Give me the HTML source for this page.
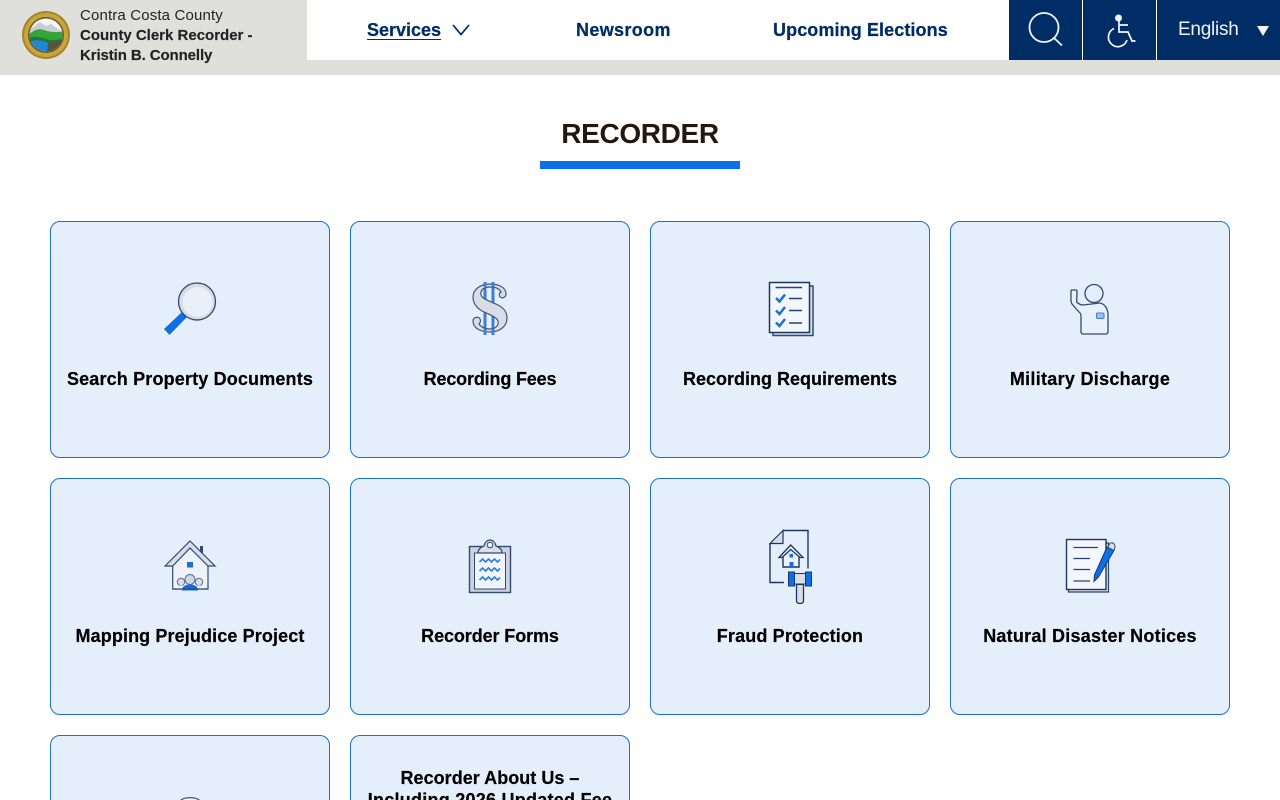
<!DOCTYPE html>
<html lang="en">
<head>
<meta charset="utf-8">
<title>Recorder</title>
<style>
html,body{margin:0;padding:0;width:1280px;height:800px;overflow:hidden;background:#fff;font-family:"Liberation Sans",sans-serif;}
#page{position:relative;width:1280px;height:800px;overflow:hidden;background:#fff;}
.a{position:absolute;white-space:nowrap;}
.card{position:absolute;width:278px;height:235px;background:#e5effb;border:1px solid #1a6fd0;border-radius:10px;}
.lbl{position:absolute;left:50px;width:280px;text-align:center;font-weight:700;font-size:18px;line-height:22px;color:#000;white-space:nowrap;-webkit-text-stroke:.2px #000;}
.nav{position:absolute;top:19px;font-weight:700;font-size:18px;line-height:22px;color:#002d66;white-space:nowrap;-webkit-text-stroke:.25px #002d66;}
svg{position:absolute;display:block;overflow:visible;}
</style>
</head>
<body>
<div id="page">
<div class="a" style="left:0;top:0;width:1280px;height:75px;background:#dfe0dc;"></div>
<div class="a" style="left:307px;top:0;width:702px;height:60px;background:#fff;"></div>
<div class="a" style="left:1009px;top:0;width:271px;height:60px;background:#002d66;"></div>
<div class="a" style="left:1082px;top:0;width:1px;height:60px;background:#fff;"></div>
<div class="a" style="left:1156px;top:0;width:1px;height:60px;background:#fff;"></div>

<svg style="left:22px;top:11px" width="48" height="48" viewBox="0 0 48 48">
<defs><clipPath id="seal"><circle cx="24" cy="24" r="16.500"/></clipPath></defs>
<circle cx="24" cy="24" r="24" fill="#a98426"/><circle cx="24" cy="24" r="22" fill="#c7a43f"/><circle cx="24" cy="24" r="18" fill="#6f5a20"/>
<g clip-path="url(#seal)">
<rect width="48" height="48" fill="#f3f5f5"/>
<path d="M6 20L18 11l6 4 5-2 14 10v4H6z" fill="#c9ced2"/>
<path d="M6 24c6-5 11-7 16-5s12 3 20 1v14H6z" fill="#36a336"/>
<path d="M6 27c6-2 12-1 18 1s12 1 18-1v5H6z" fill="#207a33"/>
<path d="M6 31c8-3 14-2 20 1 2 3 1 7-1 10H6z" fill="#1f86d8"/>
<path d="M26 32l14-3v8l-8 5-7-1z" fill="#55543f"/>
</g>
</svg>
<div class="a" style="left:80px;top:6px;font-size:15px;line-height:19px;color:#222;letter-spacing:.15px;">Contra Costa County</div>
<div class="a" style="left:80px;top:26px;font-size:15px;line-height:19px;font-weight:700;color:#222;letter-spacing:0;-webkit-text-stroke:.15px #222;">County Clerk Recorder -</div>
<div class="a" style="left:80px;top:46px;font-size:15px;line-height:19px;font-weight:700;color:#222;letter-spacing:-.1px;-webkit-text-stroke:.15px #222;">Kristin B. Connelly</div>

<div class="nav" style="left:367px;text-decoration:underline;text-underline-offset:3px;letter-spacing:0;">Services</div>
<svg style="left:452px;top:24px" width="18" height="12" viewBox="0 0 18 12"><path d="M1 1l8 9.500L17 1" fill="none" stroke="#002d66" stroke-width="1.700"/></svg>
<div class="nav" style="left:576px;letter-spacing:.35px;">Newsroom</div>
<div class="nav" style="left:773px;letter-spacing:.1px;">Upcoming Elections</div>

<svg style="left:1028px;top:12px" width="36" height="36" viewBox="0 0 36 36"><circle cx="16" cy="15.500" r="14.500" fill="none" stroke="#f4f6f8" stroke-width="1.800"/><path d="M25.500 25.500l8.500 8" stroke="#f4f6f8" stroke-width="1.800" fill="none"/></svg>
<svg style="left:1106px;top:14px" width="30" height="33" viewBox="0 0 30 33">
<circle cx="12.500" cy="4" r="3.500" fill="#f4f6f8"/>
<path d="M13 7v11h9l4 9h3.500M13 11h9" fill="none" stroke="#f4f6f8" stroke-width="1.700"/>
<path d="M8 14.500A9.500 9.500 0 1 0 21 26" fill="none" stroke="#f4f6f8" stroke-width="1.700"/>
</svg>
<div class="a" style="left:1178px;top:18px;font-size:19px;line-height:23px;color:#eef2f6;letter-spacing:-.25px;">English</div>
<svg style="left:1257px;top:26px" width="12" height="10" viewBox="0 0 12 10"><path d="M0 0h12L6 10z" fill="#f4f6f8"/></svg>

<div class="a" style="left:0;width:1280px;top:117px;text-align:center;font-size:28px;line-height:34px;font-weight:700;color:#25170b;letter-spacing:-.35px;">RECORDER</div>
<div class="a" style="left:540px;top:161px;width:200px;height:8px;background:#0b6fe8;"></div>

<div class="card" style="left:50px;top:221px"></div>
<div class="card" style="left:350px;top:221px"></div>
<div class="card" style="left:650px;top:221px"></div>
<div class="card" style="left:950px;top:221px"></div>
<div class="card" style="left:50px;top:478px"></div>
<div class="card" style="left:350px;top:478px"></div>
<div class="card" style="left:650px;top:478px"></div>
<div class="card" style="left:950px;top:478px"></div>
<div class="card" style="left:50px;top:735px"></div>
<div class="card" style="left:350px;top:735px"></div>

<div class="lbl" style="top:368px;letter-spacing:.16px;">Search Property Documents</div>
<div class="lbl" style="top:368px;left:350px;letter-spacing:-.17px;">Recording Fees</div>
<div class="lbl" style="top:368px;left:650px;letter-spacing:0;">Recording Requirements</div>
<div class="lbl" style="top:368px;left:950px;letter-spacing:.29px;">Military Discharge</div>
<div class="lbl" style="top:625px;letter-spacing:.12px;">Mapping Prejudice Project</div>
<div class="lbl" style="top:625px;left:350px;letter-spacing:-.1px;">Recorder Forms</div>
<div class="lbl" style="top:625px;left:650px;letter-spacing:.15px;">Fraud Protection</div>
<div class="lbl" style="top:625px;left:950px;letter-spacing:.23px;">Natural Disaster Notices</div>
<div class="lbl" style="top:767px;left:350px;letter-spacing:.03px;">Recorder About Us –</div>
<div class="lbl" style="top:789px;left:350px;letter-spacing:.25px;">Including 2026 Updated Fee</div>

<!-- magnifier -->
<svg style="left:150px;top:270px" width="80" height="75" viewBox="0 0 80 75">
<path d="M14 59L32 42l5 5-17.500 18z" fill="#0b6fe8"/>
<circle cx="47" cy="31.500" r="18.500" fill="#d6dae3" stroke="#324a70" stroke-width="1.300"/><circle cx="47.500" cy="32" r="15" fill="#e9f0fa"/>
</svg>
<!-- dollar -->
<svg style="left:450px;top:270px" width="80" height="75" viewBox="0 0 80 75">
<path d="M35 12v53M43 12v53" stroke="#3f7fd0" stroke-width="3" fill="none"/>
<path d="M40 14C48 14 56 17 56 24C56 28 51 29 49.500 26C49 24 50 22 51 22C49 18 45 17 40 17C34 17 30 20 31 25C32 29 42 32 48 35C54 38 57 42 57 48C57 57 49 62 40 62C32 62 23 59 23 51C23 47 29 46 30 49C31 51 30 53 29 54C31 57 35 59 40 59C46 59 49 55 48 51C47 47 38 44 32 41C27 38 23 34 23 27C23 19 31 14 40 14Z" fill="#d9dde6" stroke="#40577d" stroke-width="1.200"/>
<path d="M35 12v5M43 12v5M35 59v6M43 59v6" stroke="#3f7fd0" stroke-width="3" fill="none"/>
</svg>
<!-- checklist -->
<svg style="left:750px;top:270px" width="80" height="75" viewBox="0 0 80 75">
<rect x="23" y="16" width="40" height="49.500" fill="#d8dfeb" stroke="#324a70" stroke-width="1.500"/>
<rect x="19.500" y="12.500" width="40" height="50" fill="#f3f7fd" stroke="#1b3766" stroke-width="1.500"/>
<path d="M25.500 17.500H52M39 28.500h13M39 40.500h13M39 53h13" stroke="#24406f" stroke-width="1.400"/>
<path d="M26 28l3.500 3.500L35 24.500M26 40.500l3.500 3.500L35 37M26 52.500l3.500 3.500L35 49" fill="none" stroke="#176fd8" stroke-width="2.500"/>
</svg>
<!-- military -->
<svg style="left:1050px;top:270px" width="80" height="75" viewBox="0 0 80 75">
<circle cx="44" cy="23.500" r="9" fill="none" stroke="#324a70" stroke-width="1.300"/>
<path d="M21.500 20h4.500c.7 0 1 .5 1 1l-.300 11c2 2 4 3 6.300 3L50 33c5 1 8 6 8 12v17c0 1-1 2-2 2H33c-1 0-2-1-2-2V46c0-2-.5-3-2-4l-7-8c-.5-1-1-2-1-3V21z" fill="#e8f0fb" stroke="#324a70" stroke-width="1.300"/>
<rect x="46.500" y="43" width="7.500" height="5.500" rx="1" fill="#9dbfed" stroke="#3d7cd0"/>
</svg>
<!-- house -->
<svg style="left:150px;top:530px" width="80" height="75" viewBox="0 0 80 75">
<path d="M50 24v-8h3v12z" fill="#2b4b7c"/>
<path d="M22.700 59V35L40 18l18 17v24z" fill="#eef3fb" stroke="#324a70" stroke-width="1.200"/>
<path d="M15 36L40 11l25 25h-7L40 18 22.700 36z" fill="#d8dde6" stroke="#324a70" stroke-width="1.200"/>
<rect x="37" y="32" width="6" height="5.500" fill="#176fd8"/>
<circle cx="31" cy="52" r="3.700" fill="#d8dde6" stroke="#5a6e90"/><circle cx="49" cy="52" r="3.700" fill="#d8dde6" stroke="#5a6e90"/>
<path d="M26 59c0-2 2-3.500 5-3.500h18c3 0 5 1.500 5 3.500z" fill="#f3f7fd"/>
<circle cx="40" cy="49.500" r="5" fill="#d0d6e2" stroke="#5a6e90"/>
<path d="M32 60.500c0-4 3-6 8-6s8 2 8 6z" fill="#0b6fe8"/>
<path d="M22.700 59h35" stroke="#324a70" stroke-width="1.200"/>
</svg>
<!-- clipboard -->
<svg style="left:450px;top:530px" width="80" height="75" viewBox="0 0 80 75">
<rect x="19.500" y="16.500" width="41" height="46" fill="#ccd3df" stroke="#324a70" stroke-width="1.400"/>
<rect x="24.500" y="23" width="31" height="36" fill="#f0f5fc" stroke="#324a70" stroke-width="1"/>
<path d="M28 23c0-4 3-6 6-7 .8-3.500 3-6 6-6s5.200 2.500 6 6c3 1 6 3 6 7z" fill="#d8dde6" stroke="#324a70" stroke-width="1.200"/>
<circle cx="40" cy="15" r="2.800" fill="#eef3fb" stroke="#324a70"/>
<path d="M29.500 32l3-3 3 3 3-3 3 3 3-3 3 3 2.500-2.500M29.500 41l3-3 3 3 3-3 3 3 3-3 3 3 2.500-2.500M29.500 50l3-3 3 3 3-3 3 3 3-3 3 3 2.500-2.500" fill="none" stroke="#2a7be0" stroke-width="1.600"/>
</svg>
<!-- fraud -->
<svg style="left:750px;top:525px" width="80" height="85" viewBox="0 0 80 85">
<path d="M33 5.500h25v38" fill="none" stroke="#1b3766" stroke-width="1.400"/>
<path d="M33 5.500L20 18.500h13z" fill="#d8dde6" stroke="#1b3766" stroke-width="1.200"/>
<path d="M20 18.500V57.500h14" fill="none" stroke="#1b3766" stroke-width="1.400"/>
<path d="M33 31v11h16V31" fill="#eef3fb" stroke="#1b3766" stroke-width="1.400"/>
<path d="M29 32.500L40.700 20 53 32.500h-3L40.700 24.500 32 32.500z" fill="#eef3fb" stroke="#1b3766" stroke-width="1.300"/>
<rect x="39.500" y="37" width="4" height="5" fill="#176fd8"/><rect x="39.500" y="29" width="3.500" height="3.500" fill="#176fd8"/>
<rect x="43" y="48.500" width="14" height="10.500" fill="#d8dde6" stroke="#1b3766"/>
<rect x="38.500" y="47" width="6" height="14" fill="#0b6fe8" stroke="#1b3766"/><rect x="55.500" y="47" width="6" height="14" fill="#0b6fe8" stroke="#1b3766"/>
<path d="M46.500 59.500v16.500c0 1.500 1.500 2.500 3.500 2.500s3.500-1 3.500-2.500V59.500z" fill="#d8dde6" stroke="#1b3766" stroke-width="1.300"/>
</svg>
<!-- notes -->
<svg style="left:1050px;top:530px" width="80" height="75" viewBox="0 0 80 75">
<rect x="18.500" y="13" width="40" height="49" fill="#d8dfeb" stroke="#324a70" stroke-width="1.300"/>
<rect x="16.500" y="9.500" width="39.500" height="50" fill="#f3f7fd" stroke="#1b3766" stroke-width="1.400"/>
<path d="M23.500 17.500H48M23.500 28.500H40M23.500 39.500H40M23.500 51H40" stroke="#24406f" stroke-width="1.300"/>
<path d="M57 17l7 3.500L48.500 47 44 51.500 44.500 45z" fill="#0b6fe8" stroke="#1b3766" stroke-width="1"/>
<path d="M58 17c.8-3 3-5 5-4s2.500 3.500 1.500 6l-.5 1.500-6-3z" fill="#d8dde6" stroke="#324a70"/>
</svg>
<!-- partial icon in last-row card -->
<svg style="left:178px;top:797px" width="24" height="3" viewBox="0 0 24 3"><path d="M2 4C4 1.500 8 .7 12 .7S20 1.500 22 4" fill="#eef3fb" stroke="#324a70" stroke-width="1.200"/></svg>
</div>
</body>
</html>
